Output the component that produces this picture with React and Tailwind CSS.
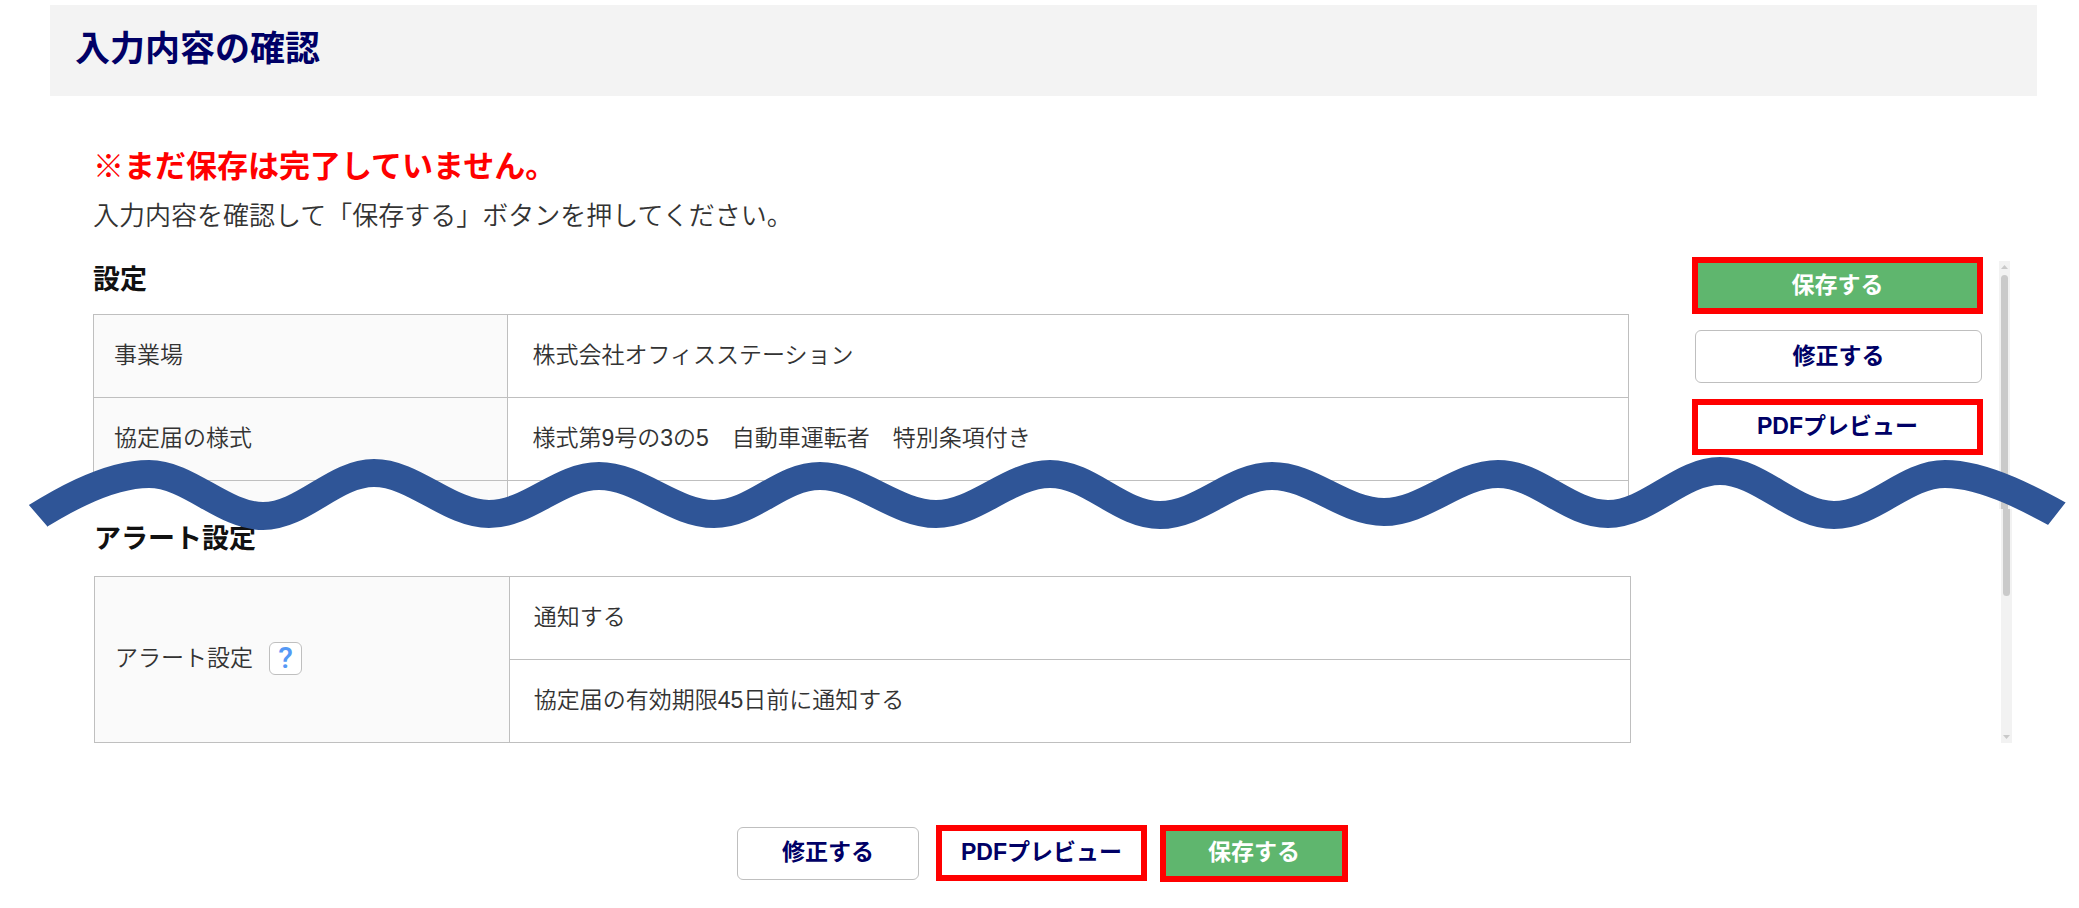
import React from "react";

const WAVE =
  "M20 527 C37 517 98 474 149 474 C189 474 223 516 263 516 C303 516 334 473 374 473 C414 473 449 514 489 514 C529 514 559 476 599 476 C639 476 674 514 714 514 C754 514 780 476 820 476 C860 476 896 514 936 514 C976 514 1010 474 1050 474 C1090 474 1120 515 1160 515 C1200 515 1232 476 1272 476 C1312 476 1344 512 1384 512 C1424 512 1458 474 1498 474 C1538 474 1568 514 1608 514 C1648 514 1680 471 1720 471 C1760 471 1794 515 1834 515 C1874 515 1905 474 1945 474 C1986 474 2036 502 2074 523";

const cell = "h-[83px] border border-[#bfbfbf] pb-0.5 text-left font-[350]";

// Torn-page wave drawn over the seam between the two panes
function Wave() {
  return (
    <svg
      className="absolute inset-x-0 bottom-[-26px] h-[90px] w-full pointer-events-none"
      viewBox="0 445 2079 90"
      preserveAspectRatio="none"
      aria-hidden="true"
    >
      <clipPath id="wave-ends">
        <polygon points="28,504 28,440 2066,440 2066,502 2048,525 2048,560 47,560 47,526" />
      </clipPath>
      <clipPath id="wave-under">
        <rect x="90" y="445" width="1545" height="67" />
      </clipPath>
      {/* hides the cut-off table row below the wave */}
      <path d={`${WAVE} V560 H20 Z`} fill="#fff" clipPath="url(#wave-under)" />
      <path
        d={WAVE}
        fill="none"
        stroke="#2f5597"
        strokeWidth="28"
        clipPath="url(#wave-ends)"
      />
    </svg>
  );
}

function Button({ children, variant = "plain", className = "" }) {
  const styles = {
    plain: "h-[53px] rounded-md border border-[#bfbfbf] bg-white text-[#000066]",
    outlined: "h-14 border-6 border-[#ff0000] bg-white text-[#000066]",
    save: "h-[57px] border-6 border-[#ff0000] bg-[#5fb66e] text-white",
  };
  return (
    <button
      type="button"
      className={`pb-0.5 text-[23px] leading-8 font-bold whitespace-nowrap ${styles[variant]} ${className}`}
    >
      {children}
    </button>
  );
}

function ScrollTrack({ end }) {
  return (
    <div className="flex w-[11px] flex-col items-center self-stretch bg-[#f2f2f2]">
      {!end && (
        <svg className="mt-1 mb-1.5 h-1 w-[7px] shrink-0" viewBox="0 0 7 4" aria-hidden="true">
          <path d="M0 4 L3.5 0 L7 4 Z" fill="#c9c9c9" />
        </svg>
      )}
      <div
        className={
          end
            ? "h-[87px] w-[7px] rounded-b-full bg-[#cacaca]"
            : "w-[7px] flex-1 rounded-t-full bg-[#cacaca]"
        }
      />
      {end && (
        <svg className="mt-auto mb-1 h-1 w-[7px] shrink-0" viewBox="0 0 7 4" aria-hidden="true">
          <path d="M0 0 L3.5 4 L7 0 Z" fill="#c9c9c9" />
        </svg>
      )}
    </div>
  );
}

export default function App() {
  return (
    <div className="bg-white pt-[5px] pb-[27px] font-['Liberation_Sans','Noto_Sans_CJK_JP',sans-serif] text-[23px] leading-8 text-[#333]">
      <header className="mr-[42px] ml-[50px] h-[91px] bg-[#f3f3f3] px-[25px] pt-[22px]">
        <h1 className="text-[35px] leading-[44px] font-bold text-[#000066]">
          入力内容の確認
        </h1>
      </header>

      <div className="pt-[51px] pl-[93px]">
        <p className="text-[31px] leading-10 font-bold text-[#ff0000]">
          ※まだ保存は完了していません。
        </p>
        <p className="mt-[9px] text-[26px] leading-10 font-[350]">
          入力内容を確認して「保存する」ボタンを押してください。
        </p>
      </div>

      <main>
        <section className="relative flex pt-[21px] pr-[69px] pl-[93px]">
          <div className="min-w-0 flex-1 pt-[5px]">
            <h2 className="text-[27px] leading-9 font-bold text-[#111]">設定</h2>
            <table className="mt-4 w-full table-fixed border-collapse">
              <tbody>
                <tr>
                  <th className={`${cell} w-[27%] bg-[#fafafa] pl-5`}>事業場</th>
                  <td className={`${cell} pl-6`}>株式会社オフィスステーション</td>
                </tr>
                <tr>
                  <th className={`${cell} bg-[#fafafa] pl-5`}>協定届の様式</th>
                  <td className={`${cell} pl-6`}>
                    様式第9号の3の5　自動車運転者　特別条項付き
                  </td>
                </tr>
                <tr>
                  <td className="h-7 border border-b-0 border-[#bfbfbf] bg-[#fafafa]" />
                  <td className="h-7 border border-b-0 border-[#bfbfbf]" />
                </tr>
              </tbody>
            </table>
          </div>
          <aside className="ml-[63px] flex w-[291px] flex-col gap-4">
            <Button variant="save">保存する</Button>
            <Button className="mr-px ml-[3px]">修正する</Button>
            <Button variant="outlined">PDFプレビュー</Button>
          </aside>
          <div className="ml-4 flex pt-1">
            <ScrollTrack />
          </div>
          <Wave />
        </section>

        <section className="flex pr-[67px] pl-[94px]">
          <div className="min-w-0 flex-1 pt-3">
            <h2 className="text-[27px] leading-9 font-bold text-[#111]">
              アラート設定
            </h2>
            <table className="mt-[19px] w-full table-fixed border-collapse">
              <tbody>
                <tr>
                  <th rowSpan={2} className={`${cell} w-[27%] bg-[#fafafa] pl-5`}>
                    <span className="flex items-center gap-4">
                      アラート設定
                      <button
                        type="button"
                        aria-label="ヘルプ"
                        className="flex size-[33px] items-center justify-center rounded-md border border-[#bfbfbf] bg-white font-['Roboto',sans-serif] text-[30px] leading-8 font-medium text-[#5599f5]"
                      >
                        ?
                      </button>
                    </span>
                  </th>
                  <td className={`${cell} pl-6`}>通知する</td>
                </tr>
                <tr>
                  <td className={`${cell} pl-6`}>協定届の有効期限45日前に通知する</td>
                </tr>
              </tbody>
            </table>
          </div>
          <div className="ml-[370px] flex">
            <ScrollTrack end />
          </div>
        </section>
      </main>

      <footer className="mt-[82px] flex items-center justify-center pl-1.5">
        <Button className="w-[182px]">修正する</Button>
        <Button variant="outlined" className="ml-[17px] w-[211px]">
          PDFプレビュー
        </Button>
        <Button variant="save" className="ml-[13px] w-[188px]">
          保存する
        </Button>
      </footer>
    </div>
  );
}
